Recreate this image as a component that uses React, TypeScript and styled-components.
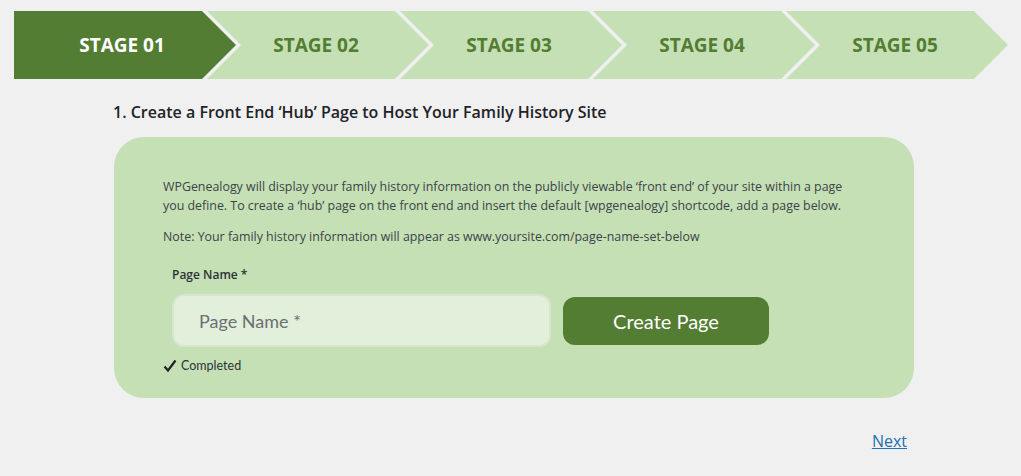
import styled, { createGlobalStyle } from "styled-components";

const STAGES = ["Stage 01", "Stage 02", "Stage 03", "Stage 04", "Stage 05"];
const DEPTH = 34;

const GlobalStyle = createGlobalStyle`
  html, body {
    margin: 0;
    padding: 0;
    background: #f0f0f1;
    font-family: "Open Sans", "Noto Sans", sans-serif;
    color: #1d2327;
  }
`;

const Page = styled.div`
  width: 1021px;
  height: 476px;
  overflow: hidden;
  padding-top: 11px;
  box-sizing: border-box;
`;

const Stepper = styled.ol`
  display: flex;
  list-style: none;
  margin: 0 0 0 14px;
  padding: 0;
  height: 68px;
`;

const Step = styled.li<{ active?: boolean; first?: boolean }>`
  flex: 0 0 222px;
  height: 68px;
  margin-left: ${({ first }) => (first ? "0" : "-29px")};
  display: flex;
  align-items: center;
  justify-content: center;
  padding: 0 ${({ first }) => (first ? "6px" : "4px")} 0 0;
  box-sizing: border-box;
  background: ${({ active }) => (active ? "#537d33" : "#c5e0b4")};
  color: ${({ active }) => (active ? "#ffffff" : "#537d33")};
  font-weight: 700;
  font-size: 19px;
  text-transform: uppercase;
  clip-path: ${({ first }) =>
    first
      ? `polygon(0 0, calc(100% - ${DEPTH}px) 0, 100% 50%, calc(100% - ${DEPTH}px) 100%, 0 100%)`
      : `polygon(0 0, calc(100% - ${DEPTH}px) 0, 100% 50%, calc(100% - ${DEPTH}px) 100%, 0 100%, ${DEPTH}px 50%)`};
`;

const Content = styled.main`
  width: 800px;
  margin-left: 114px;
`;

const Title = styled.h2`
  margin: 22px 0 0 -1px;
  font-size: 16px;
  font-weight: 600;
  line-height: 22px;
  color: #1d2327;
`;

const Card = styled.section`
  margin-top: 14px;
  background: #c5e0b4;
  border-radius: 30px;
  height: 261px;
  box-sizing: border-box;
  padding: 40px 49px 0;
`;

const Text = styled.p<{ gap?: number }>`
  margin: 0 0 ${({ gap }) => gap ?? 0}px;
  font-size: 12.4px;
  line-height: 19px;
  color: #3c434a;
`;

const Label = styled.label`
  display: block;
  margin: 20px 0 0 9px;
  font-size: 12px;
  font-weight: 600;
  color: #2c3338;
`;

const FormRow = styled.div`
  display: flex;
  align-items: center;
  gap: 12px;
  margin: 11px 0 0 9px;
`;

const Input = styled.input`
  width: 379px;
  height: 53px;
  box-sizing: border-box;
  border: 2px solid #d8e6cf;
  border-radius: 12px;
  background: #e2efda;
  padding: 0 25px;
  font-family: "Lato", sans-serif;
  font-size: 18px;
  color: #2c3338;
  outline: none;

  &::placeholder {
    color: #6b7075;
  }
`;

const Button = styled.button`
  width: 206px;
  height: 48px;
  border: none;
  border-radius: 12px;
  background: #537d33;
  color: #ffffff;
  font-family: "Lato", sans-serif;
  font-size: 20px;
  cursor: pointer;
`;

const Status = styled.div`
  display: flex;
  align-items: center;
  gap: 4px;
  margin-top: 11px;
  font-family: "Lato", sans-serif;
  font-size: 12.5px;
  color: #2c3338;
`;

const Footer = styled.div`
  display: flex;
  justify-content: flex-end;
  padding: 32px 7px 0 0;
`;

const NextLink = styled.a`
  color: #2271b1;
  font-size: 16px;
  text-decoration: underline;
`;

const Check = () => (
  <svg width="14" height="14" viewBox="0 0 14 14" aria-hidden="true">
    <path d="M1.5 7.5 L5 11.5 L12.5 1.5" fill="none" stroke="#1d2327" strokeWidth="2.2" />
  </svg>
);

export default function App() {
  return (
    <Page>
      <GlobalStyle />
      <Stepper>
        {STAGES.map((s, i) => (
          <Step key={s} active={i === 0} first={i === 0}>
            {s}
          </Step>
        ))}
      </Stepper>
      <Content>
        <Title>1. Create a Front End ‘Hub’ Page to Host Your Family History Site</Title>
        <Card>
          <Text gap={12}>
            WPGenealogy will display your family history information on the publicly viewable ‘front end’ of your site within a page
            you define. To create a ‘hub’ page on the front end and insert the default [wpgenealogy] shortcode, add a page below.
          </Text>
          <Text>Note: Your family history information will appear as www.yoursite.com/page-name-set-below</Text>
          <Label htmlFor="page-name">Page Name *</Label>
          <FormRow>
            <Input id="page-name" placeholder="Page Name *" />
            <Button>Create Page</Button>
          </FormRow>
          <Status>
            <Check />
            Completed
          </Status>
        </Card>
        <Footer>
          <NextLink href="#">Next</NextLink>
        </Footer>
      </Content>
    </Page>
  );
}
